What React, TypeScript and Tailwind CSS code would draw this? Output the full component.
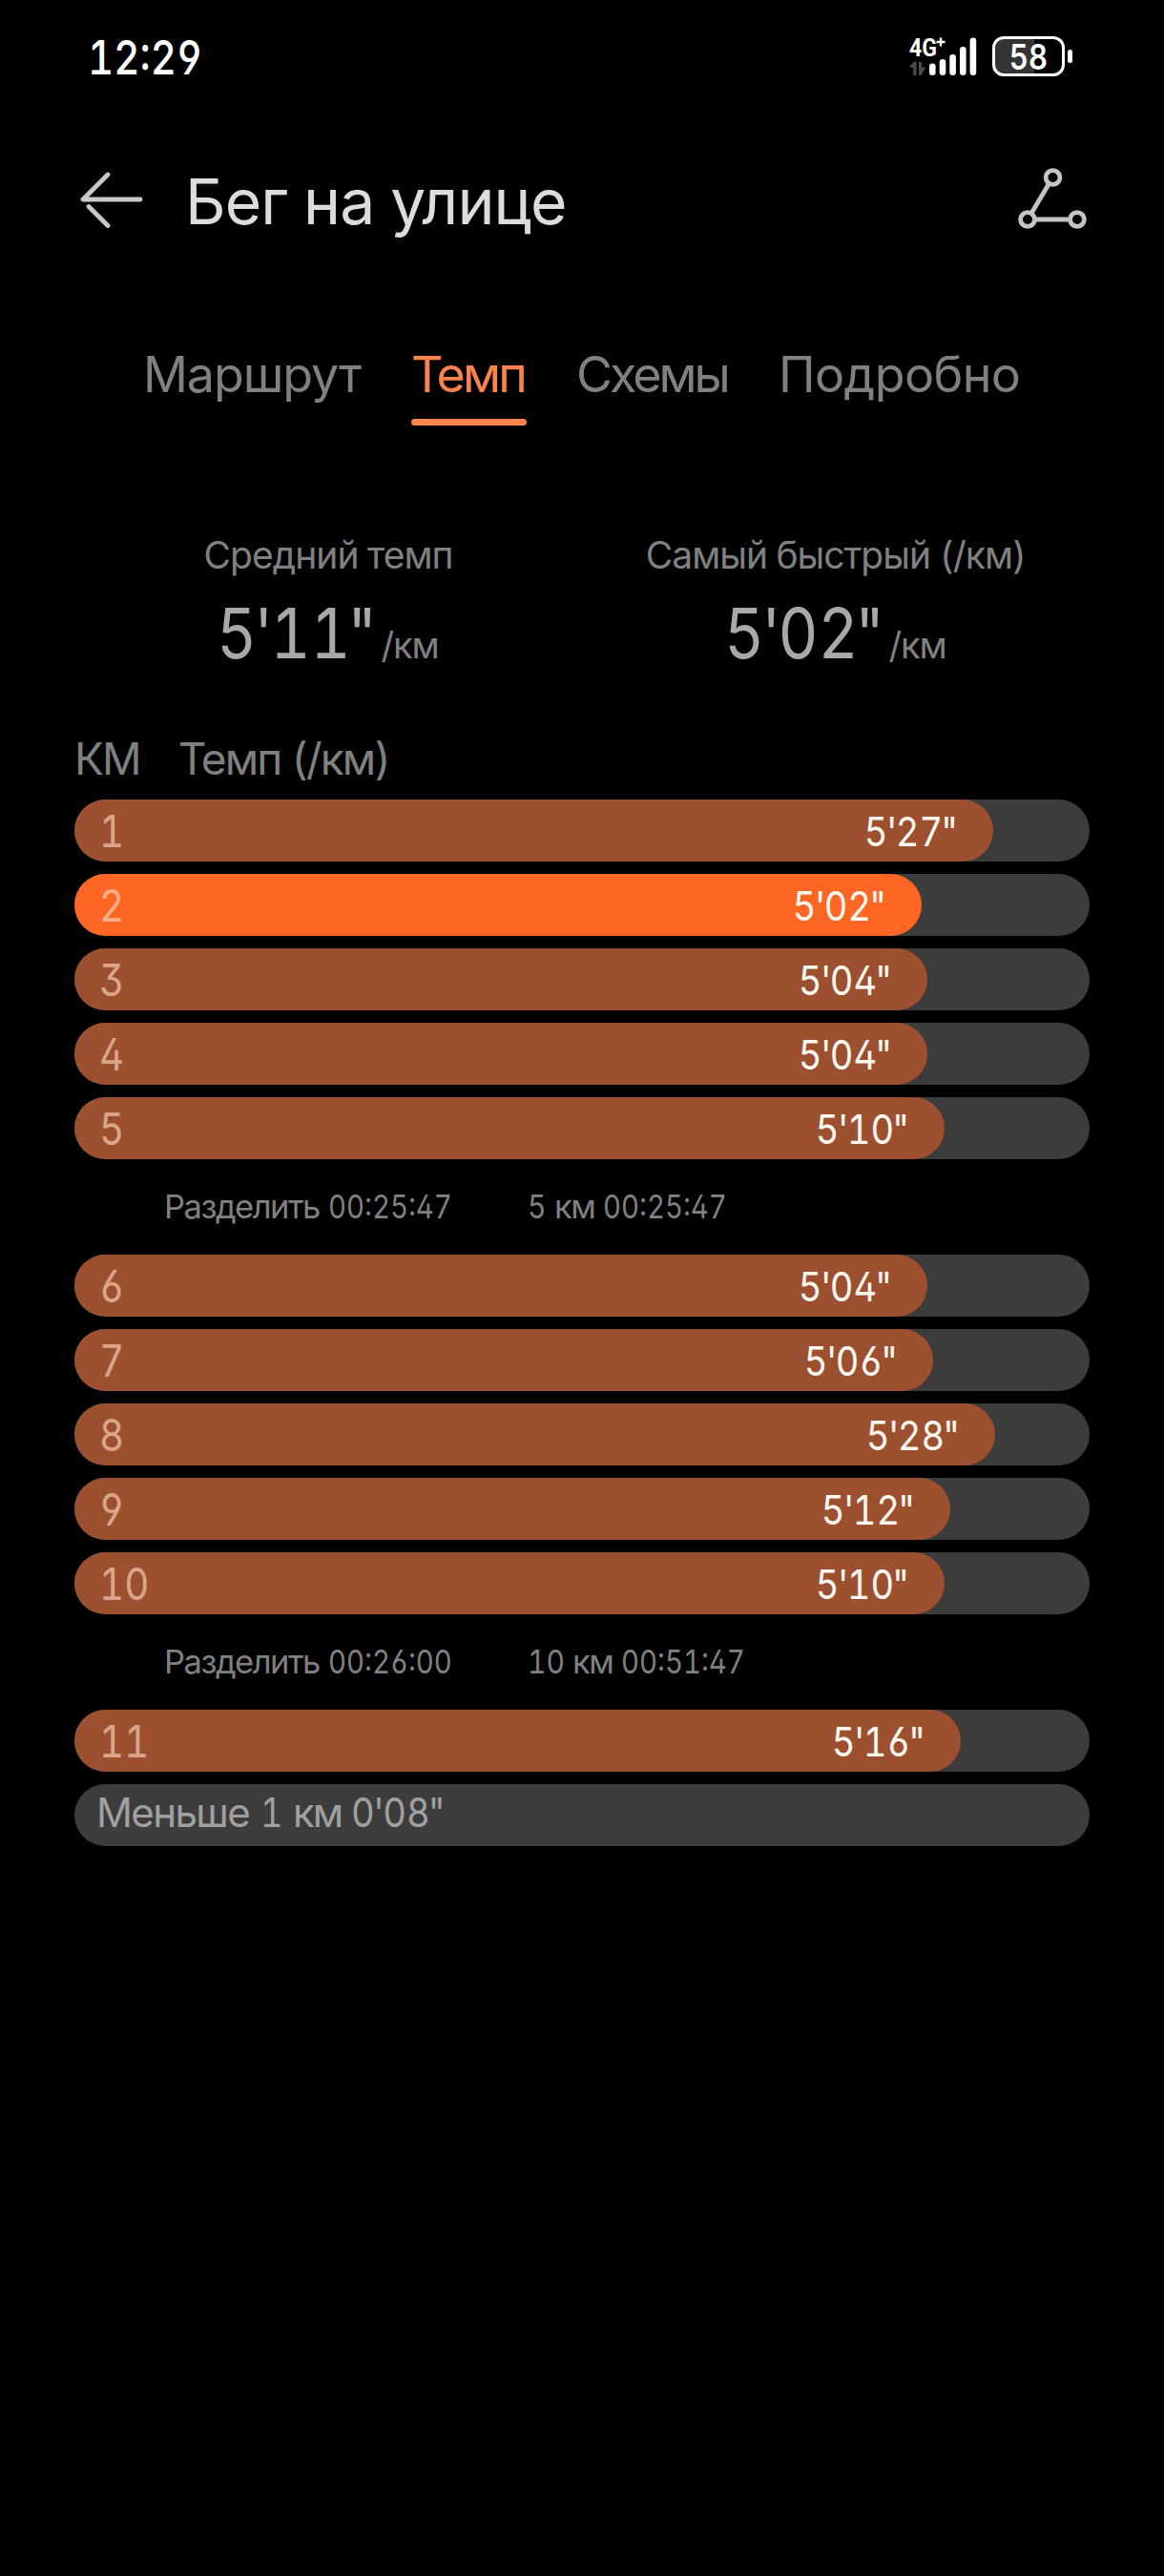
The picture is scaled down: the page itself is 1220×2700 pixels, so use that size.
type Lap = { kind: 'lap'; n: number; pace: string; width: number; best?: boolean };
type Split = { kind: 'split'; time: string; km: string; total: string; kmWidth: string };

const rows: (Lap | Split)[] = [
  { kind: 'lap', n: 1, pace: `5'27"`, width: 963 },
  { kind: 'lap', n: 2, pace: `5'02"`, width: 888, best: true },
  { kind: 'lap', n: 3, pace: `5'04"`, width: 894 },
  { kind: 'lap', n: 4, pace: `5'04"`, width: 894 },
  { kind: 'lap', n: 5, pace: `5'10"`, width: 912 },
  { kind: 'split', time: '00:25:47', km: '5', total: '00:25:47', kmWidth: 'w-[28px]' },
  { kind: 'lap', n: 6, pace: `5'04"`, width: 894 },
  { kind: 'lap', n: 7, pace: `5'06"`, width: 900 },
  { kind: 'lap', n: 8, pace: `5'28"`, width: 965 },
  { kind: 'lap', n: 9, pace: `5'12"`, width: 918 },
  { kind: 'lap', n: 10, pace: `5'10"`, width: 912 },
  { kind: 'split', time: '00:26:00', km: '10', total: '00:51:47', kmWidth: 'w-[47px]' },
  { kind: 'lap', n: 11, pace: `5'16"`, width: 929 },
];

const tabs = [
  { label: 'Маршрут', style: 'w-[233px] tracking-[-1.1px] text-[#808080]' },
  { label: 'Темп', style: 'w-[121px] tracking-[-2.9px] text-[#fe824c]', active: true },
  { label: 'Схемы', style: 'w-[168px] pl-[4px] tracking-[-3px] text-[#808080]' },
  { label: 'Подробно', style: 'w-[256px] tracking-[-0.6px] text-[#808080]' },
];

/* Condensed digits; prime marks sit tighter than the tabular digits around them. */
function Num({ children, className = '' }: { children: string; className?: string }) {
  const [head, tail] = children.split("'");
  return (
    <span className={`inline-block whitespace-nowrap ${className}`}>
      {head}
      {tail !== undefined && (
        <>
          <span className="-mx-[0.04em]">'</span>
          {tail.slice(0, -1)}
          <span className="-ml-[0.05em]">{tail.slice(-1)}</span>
        </>
      )}
    </span>
  );
}

function StatusBar() {
  return (
    <header className="flex h-[120px] items-center justify-between pr-[96px] pl-[92px] text-white">
      <Num className="origin-left scale-x-[0.84] text-[50px] leading-none font-medium">12:29</Num>
      <div className="flex h-[46px] items-start gap-[15px]">
        <svg className="overflow-visible" width="72" height="44" viewBox="0 0 72 44" fill="#fff">
          <text x="0" y="22" fontFamily="Roboto" fontWeight="700" fontSize="26" textLength="29" lengthAdjust="spacingAndGlyphs">4G</text>
          <path d="M33 2.500v9M28.500 7h9" stroke="#fff" strokeWidth="2.400" />
          <path d="M0 33l5-5.500h2.500V42H4.200v-8zM10 28h3.200v5.500H17L12.500 42H10z" fill="#4a4a4a" />
          <rect x="21" y="29.500" width="6.600" height="12.500" rx="3.300" />
          <rect x="31.700" y="25" width="6.600" height="17" rx="3.300" />
          <rect x="42.300" y="20" width="6.600" height="22" rx="3.300" />
          <rect x="53" y="12" width="6.600" height="30" rx="3.300" />
          <rect x="63.600" y="2.500" width="6.600" height="39.500" rx="3.300" />
        </svg>
        <div className="flex items-center gap-[3px] pt-[1px]">
          <div className="flex h-[42px] w-[76px] items-center justify-center rounded-[12px] border-[3px] border-white bg-linear-to-r from-[#343434] from-[59%] to-black to-[59%]">
            <span className="inline-block scale-x-[0.84] text-[37px] leading-none font-semibold">58</span>
          </div>
          <div className="h-[14px] w-[5px] rounded-full bg-white" />
        </div>
      </div>
    </header>
  );
}

function TitleBar() {
  return (
    <div className="flex h-[180px] items-center pr-[80px] pl-[84px]">
      <svg width="66" height="62" viewBox="0 0 66 62" fill="none" stroke="#c8c8c8" strokeWidth="4.800" strokeLinecap="round">
        <path d="M29 4L3 30h60M9 37.500l20 20" strokeLinejoin="round" />
      </svg>
      <h1 className="ml-[44px] flex-1 pt-[1px] text-[66px] leading-none font-normal tracking-[-0.900px] text-[#dcdcdc]">Бег на улице</h1>
      <svg className="-mt-[4px]" width="74" height="68" viewBox="0 0 74 68" fill="none" stroke="#c4c4c4" strokeWidth="4.800">
        <circle cx="37.500" cy="12" r="7.400" />
        <circle cx="11" cy="56" r="7.400" />
        <circle cx="63" cy="56" r="7.400" />
        <path d="M33.500 18.500L15 49.500M18.500 56h37" />
      </svg>
    </div>
  );
}

function Stat({ label, value, style }: { label: string; value: string; style: string }) {
  return (
    <div className="flex flex-col items-center">
      <span className={`text-[39px] leading-[48px] whitespace-nowrap text-[#808080] ${style}`}>{label}</span>
      <div className="mt-[20px] flex items-baseline text-[#a8a8a8]">
        <span className="w-[171px]">
          <Num className="-ml-[2px] origin-left scale-x-[0.89] text-[73px] leading-[76px]">{value}</Num>
        </span>
        <span className="w-[60px] text-[38px] leading-none tracking-[-1.200px] whitespace-nowrap text-[#808080]">/км</span>
      </div>
    </div>
  );
}

function LapBar({ lap }: { lap: Lap }) {
  return (
    <div className="h-[65px] rounded-full bg-[#3c3c3c]">
      <div
        className={`flex h-full items-center justify-between rounded-full pr-[37px] pl-[26px] ${lap.best ? 'bg-[#fd6623]' : 'bg-[#9c502f]'}`}
        style={{ width: lap.width }}
      >
        <Num className={`origin-left scale-x-[0.86] text-[47px] leading-none ${lap.best ? 'text-[#ffb089]' : 'text-[#dba58b]'}`}>{String(lap.n)}</Num>
        <Num className="origin-right scale-x-[0.885] pt-[2px] text-[43px] leading-none text-[#fff8f0]">{lap.pace}</Num>
      </div>
    </div>
  );
}

function SplitRow({ split }: { split: Split }) {
  return (
    <div className="flex h-[74px] items-center pl-[94px] text-[34.5px] leading-none whitespace-nowrap text-[#808080]">
      <span className="flex w-[381px] items-center">
        <span className="w-[172px] tracking-[-1.500px]">Разделить</span>
        <Num className="origin-left scale-x-[0.85]">{split.time}</Num>
      </span>
      <span className={`flex ${split.kmWidth}`}>
        <Num className="origin-left scale-x-[0.87]">{split.km}</Num>
      </span>
      <span className="w-[51px] tracking-[-1.500px]">км</span>
      <Num className="origin-left scale-x-[0.85]">{split.total}</Num>
    </div>
  );
}

export default function App() {
  return (
    <div className="flex min-h-[2700px] w-[1220px] flex-col bg-black font-['Inter','Liberation_Sans',sans-serif] font-normal [font-feature-settings:'ss01','tnum']">
      <StatusBar />
      <TitleBar />
      <nav className="mt-[63px] flex gap-[48px] pl-[150px] text-[52px] leading-[60px]">
        {tabs.map((t) => (
          <div key={t.label} className={t.style}>
            <span>{t.label}</span>
            {t.active && <div className="mt-[16px] h-[7px] rounded-full bg-[#fe824c]" />}
          </div>
        ))}
      </nav>
      <section className="mx-[78px] mt-[112px] grid h-[147px] grid-cols-2">
        <Stat label="Средний темп" value={`5'11"`} style="tracking-[-0.95px]" />
        <Stat label="Самый быстрый (/км)" value={`5'02"`} style="tracking-[-1px]" />
      </section>
      <div className="mt-[63px] flex h-[54px] gap-[40px] pl-[78px] text-[46px] leading-[54px] text-[#808080]">
        <span className="tracking-[-1.900px]">КМ</span>
        <span className="tracking-[-1.900px]">Темп (/км)</span>
      </div>
      <main className="mx-[78px] mt-[16px] flex flex-col gap-[13px]">
        {rows.map((r, i) => (r.kind === 'lap' ? <LapBar key={i} lap={r} /> : <SplitRow key={i} split={r} />))}
        <div className="flex h-[65px] items-center rounded-full bg-[#3c3c3c] pb-[6px] pl-[23px] text-[42px] leading-none text-[#a0a0a0]">
          <span className="w-[172px] tracking-[-1.600px]">Меньше</span>
          <Num className="w-[34px] origin-left scale-x-[0.86]">1</Num>
          <span className="w-[61px] tracking-[-2px]">км</span>
          <Num className="origin-left scale-x-[0.91]">0'08"</Num>
        </div>
      </main>
    </div>
  );
}
